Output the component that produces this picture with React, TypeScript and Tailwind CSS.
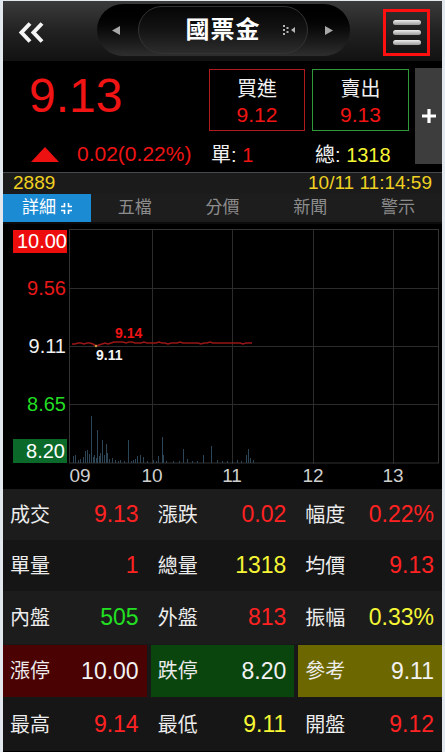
import React from "react";

type Cell = { label: string; value: string; color: string; bg?: string };

const RED = "text-[#ff2222]";
const YELLOW = "text-[#f6f634]";
const GREEN = "text-[#22e022]";
const WHITE = "text-[#f2f2f2]";

const rows: { h: string; bg: string; cells: Cell[] }[] = [
  {
    h: "h-[51px]",
    bg: "bg-[#1c1c1c]",
    cells: [
      { label: "成交", value: "9.13", color: RED },
      { label: "漲跌", value: "0.02", color: RED },
      { label: "幅度", value: "0.22%", color: RED },
    ],
  },
  {
    h: "h-[51px]",
    bg: "bg-[#151515]",
    cells: [
      { label: "單量", value: "1", color: RED },
      { label: "總量", value: "1318", color: YELLOW },
      { label: "均價", value: "9.13", color: RED },
    ],
  },
  {
    h: "h-[53px]",
    bg: "bg-[#1c1c1c]",
    cells: [
      { label: "內盤", value: "505", color: GREEN },
      { label: "外盤", value: "813", color: RED },
      { label: "振幅", value: "0.33%", color: YELLOW },
    ],
  },
  {
    h: "h-[54px]",
    bg: "bg-[#181818]",
    cells: [
      { label: "漲停", value: "10.00", color: WHITE, bg: "bg-[#4a0202]" },
      { label: "跌停", value: "8.20", color: WHITE, bg: "bg-[#0a450e]" },
      { label: "參考", value: "9.11", color: WHITE, bg: "bg-[#6d6700]" },
    ],
  },
  {
    h: "h-[53px]",
    bg: "bg-[#161616]",
    cells: [
      { label: "最高", value: "9.14", color: RED },
      { label: "最低", value: "9.11", color: YELLOW },
      { label: "開盤", value: "9.12", color: RED },
    ],
  },
];

// price line, y offset inside plot, one point every 3px
const line = [
  115, 115, 114, 114, 115, 114, 114, 115, 117, 116, 115, 114, 115, 114, 113, 113, 113, 113, 114, 113, 113,
  114, 114, 114, 113, 114, 114, 114, 114, 113, 114, 114, 115, 114, 114, 114, 113, 114, 114, 114, 114, 114,
  114, 115, 114, 114, 113, 114, 114, 114, 114, 114, 114, 114, 114, 114, 114, 115, 114, 114, 114,
];

// volume bars: [x inside plot, height]
const bars: [number, number][] = [
  [4, 7], [6, 8], [9, 3], [11, 4], [14, 6], [16, 12], [18, 13], [20, 9], [22, 47], [24, 6], [25, 8],
  [27, 5], [28, 33], [30, 7], [31, 10], [33, 23], [35, 8], [37, 19], [38, 10], [40, 4], [43, 5], [46, 3],
  [49, 2], [51, 3], [55, 2], [59, 23], [62, 2], [64, 3], [66, 4], [68, 7], [71, 8], [74, 6], [78, 2],
  [84, 3], [87, 2], [89, 7], [93, 26], [94, 8], [97, 2], [104, 2], [110, 2], [114, 14], [118, 4],
  [123, 2], [128, 2], [134, 8], [142, 17], [148, 3], [153, 2], [158, 2], [163, 2], [168, 3], [172, 2],
  [177, 8], [179, 14], [181, 5], [184, 3],
];

function BackIcon() {
  return (
    <svg width="27" height="23" viewBox="0 0 27 23">
      <polyline points="12,2.5 3.5,11.5 12,20.5" fill="none" stroke="#f4f4f4" strokeWidth="4" strokeLinejoin="miter" />
      <polyline points="24,2.5 15.5,11.5 24,20.5" fill="none" stroke="#f4f4f4" strokeWidth="4" strokeLinejoin="miter" />
    </svg>
  );
}

function Tri({ dir }: { dir: "left" | "right" }) {
  return (
    <svg width="8" height="9" viewBox="0 0 8 9">
      {dir === "left" ? <polygon points="8,0 0,4.5 8,9" fill="#a8a8a8" /> : <polygon points="0,0 8,4.5 0,9" fill="#a8a8a8" />}
    </svg>
  );
}

function StockIcon() {
  return (
    <svg width="12" height="12" viewBox="0 0 12 12">
      <rect x="0" y="1" width="2" height="2" fill="#b5b5b5" />
      <rect x="0" y="5" width="2" height="2" fill="#b5b5b5" />
      <rect x="0" y="9" width="2" height="2" fill="#b5b5b5" />
      <rect x="3.5" y="3" width="2" height="2" fill="#b5b5b5" />
      <rect x="3.5" y="7" width="2" height="2" fill="#b5b5b5" />
      <polygon points="12,3 8,6 12,9" fill="#b5b5b5" />
    </svg>
  );
}

function CollapseIcon() {
  return (
    <svg width="11" height="11" viewBox="0 0 11 11">
      <path d="M3.5 0v3.5H0M7.5 0v3.5H11M3.5 11V7.5H0M7.5 11V7.5H11" fill="none" stroke="#ffffff" strokeWidth="1.6" />
    </svg>
  );
}

function Header() {
  return (
    <div className="flex h-[60px] items-start bg-linear-to-b from-[#3b3b3b] via-[#222222] to-[#121212]">
      <div className="ml-[15px] mt-[20px]">
        <BackIcon />
      </div>
      <div className="ml-[52px] mt-[3px] flex h-[52px] w-[253px] items-center rounded-full bg-linear-to-b from-[#000000] via-[#0c0c0c] to-[#2e2e2e] pl-[15px]">
        <Tri dir="left" />
        <div className="relative ml-[18px] flex h-[48px] w-[170px] items-center justify-center rounded-full border border-[#333333] bg-linear-to-b from-[#060606] via-[#141414] to-[#2c2c2c]">
          <span className="-mt-[1px] text-[24px] font-bold tracking-[1px] text-white">國票金</span>
          <span className="absolute right-[12px] top-[17px]">
            <StockIcon />
          </span>
        </div>
        <div className="ml-[17px]">
          <Tri dir="right" />
        </div>
      </div>
      <div className="ml-[33px] mt-[8px] flex h-[47px] w-[47px] flex-col items-center justify-center gap-[5px] border-[3px] border-[#ff1010] bg-linear-to-b from-[#2c2c2c] to-[#151515]">
        <div className="h-[5px] w-[28px] rounded-full bg-linear-to-b from-[#f0f0f0] to-[#9a9a9a]" />
        <div className="h-[5px] w-[28px] rounded-full bg-linear-to-b from-[#f0f0f0] to-[#9a9a9a]" />
        <div className="h-[5px] w-[28px] rounded-full bg-linear-to-b from-[#f0f0f0] to-[#9a9a9a]" />
      </div>
    </div>
  );
}

function Quote() {
  return (
    <div className="flex h-[112px] border-b border-[#454b52] bg-black">
      <div className="flex w-[206px] flex-col">
        <div className="h-[64px] pl-[26px] pt-[11px] text-[48px] leading-[48px] text-[#f01414]">9.13</div>
        <div className="mt-[14px] flex h-[30px] items-center pl-[28px]">
          <svg width="28" height="15" viewBox="0 0 28 15">
            <polygon points="14,0 28,15 0,15" fill="#ee1111" />
          </svg>
          <span className="ml-[18px] text-[21px] text-[#ee1414]">0.02(0.22%)</span>
        </div>
      </div>
      <div className="flex w-[200px] flex-col">
        <div className="mt-[8px] flex h-[62px] gap-[7px]">
          <div className="flex w-[96px] flex-col items-center border border-[#b01c1c] pt-[6px]">
            <span className="text-[20px] leading-[26px] text-[#f0f0f0]">買進</span>
            <span className="text-[21px] leading-[26px] text-[#f01414]">9.12</span>
          </div>
          <div className="flex w-[97px] flex-col items-center border border-[#2f9a3a] pt-[6px]">
            <span className="text-[20px] leading-[26px] text-[#f0f0f0]">賣出</span>
            <span className="text-[21px] leading-[26px] text-[#f01414]">9.13</span>
          </div>
        </div>
        <div className="mt-[9px] flex h-[30px] items-center gap-[7px] text-[20px]">
          <span className="w-[96px] pl-[2px] text-[#f0f0f0]">
            單: <span className="text-[#f01414]">1</span>
          </span>
          <span className="w-[97px] pl-[3px] text-[#f0f0f0]">
            總: <span className="text-[#f6f634]">1318</span>
          </span>
        </div>
      </div>
      <div className="ml-[6px] mt-[7px] flex h-[96px] w-[27px] items-center justify-center bg-[#3d3d3d]">
        <svg width="14" height="14" viewBox="0 0 14 14">
          <path d="M7 0v14M0 7h14" stroke="#ffffff" strokeWidth="3.2" />
        </svg>
      </div>
    </div>
  );
}

function Tabs() {
  const tabs = ["詳細", "五檔", "分價", "新聞", "警示"];
  return (
    <>
      <div className="flex h-[21px] items-center justify-between bg-[#1b1b1b] px-[10px] text-[19px] text-[#f0d020]">
        <span>2889</span>
        <span>10/11 11:14:59</span>
      </div>
      <div className="grid h-[30px] grid-cols-5 border-b-[2px] border-[#0c0c0c] bg-[#1d1d1d]">
        {tabs.map((t, i) =>
          i === 0 ? (
            <div key={t} className="flex items-center justify-center gap-[5px] bg-[#1b8bd4] text-[17px] text-white">
              {t}
              <CollapseIcon />
            </div>
          ) : (
            <div key={t} className="flex items-center justify-center text-[17px] text-[#8c8c8c]">
              {t}
            </div>
          )
        )}
      </div>
    </>
  );
}

function Chart() {
  const pts = line.map((y, i) => `${3 + i * 3},${y}`).join(" ");
  const xs = [
    { t: "09", x: 80 },
    { t: "10", x: 152 },
    { t: "11", x: 232 },
    { t: "12", x: 313 },
    { t: "13", x: 393 },
  ];
  return (
    <div className="h-[265px] bg-black pt-[5px]">
      <div className="flex h-[235px]">
        <div className="relative w-[66px] text-[20px] leading-[24px]">
          <div className="absolute left-[10px] top-[1px] h-[23px] w-[54px] bg-[#ee0d0d] text-right leading-[23px] text-white">10.00</div>
          <div className="absolute right-[3px] top-[47px] text-[#e81818]">9.56</div>
          <div className="absolute right-[3px] top-[105px] text-[#f0f0f0]">9.11</div>
          <div className="absolute right-[3px] top-[163px] text-[#22dd22]">8.65</div>
          <div className="absolute left-[10px] top-[210px] h-[24px] w-[54px] bg-[#0b6a2a] pr-[2px] text-right text-white">8.20</div>
        </div>
        <div className="relative w-[370px]">
          <svg width="370" height="235" viewBox="0 0 370 235" className="block">
            <g stroke="#2c2c2c" strokeWidth="1">
              <line x1="0" y1="59.5" x2="370" y2="59.5" />
              <line x1="0" y1="117.5" x2="370" y2="117.5" />
              <line x1="0" y1="175.5" x2="370" y2="175.5" />
              <line x1="83.5" y1="0" x2="83.5" y2="235" />
              <line x1="163.5" y1="0" x2="163.5" y2="235" />
              <line x1="244.5" y1="0" x2="244.5" y2="235" />
              <line x1="324.5" y1="0" x2="324.5" y2="235" />
            </g>
            <rect x="0.5" y="0.5" width="369" height="233.5" fill="none" stroke="#333333" />
            <g stroke="#2c4658" strokeWidth="1">
              {bars.map(([x, h]) => (
                <line key={x} x1={x + 0.5} y1={234} x2={x + 0.5} y2={234 - h} />
              ))}
            </g>
            <polyline points={pts} fill="none" stroke="#981616" strokeWidth="1.6" />
            <circle cx="27" cy="117" r="1.2" fill="#c8a040" />
          </svg>
          <span className="absolute left-[46px] top-[96px] text-[14px] font-bold leading-[16px] text-[#f01414]">9.14</span>
          <span className="absolute left-[27px] top-[118px] text-[14px] font-bold leading-[16px] text-[#f4f4f4]">9.11</span>
        </div>
      </div>
      <div className="relative h-[25px] text-[19px] leading-[24px] text-[#cfcfcf]">
        {xs.map((l) => (
          <span key={l.t} className="absolute top-0 w-[40px] text-center" style={{ left: l.x - 3 - 20 }}>
            {l.t}
          </span>
        ))}
      </div>
    </div>
  );
}

function Table() {
  return (
    <div>
      {rows.map((r, i) => (
        <div key={i} className={`grid grid-cols-3 gap-x-[4px] ${r.h} ${r.bg} ${r.cells[0].bg ? "py-[1px]" : ""}`}>
          {r.cells.map((c) => (
            <div key={c.label} className={`flex items-center justify-between pl-[7px] pr-[8px] ${c.bg ?? ""}`}>
              <span className="text-[20px] text-[#ececec]">{c.label}</span>
              <span className={`text-[23px] ${c.color}`}>{c.value}</span>
            </div>
          ))}
        </div>
      ))}
    </div>
  );
}

export default function App() {
  return (
    <div className="h-[752px] w-[445px] overflow-hidden bg-[#e3e8ee] px-[3px] pt-[1px] font-['Liberation_Sans','Noto_Sans_CJK_TC',sans-serif]">
      <div className="h-[751px] overflow-hidden bg-black">
        <Header />
        <Quote />
        <Tabs />
        <Chart />
        <Table />
      </div>
    </div>
  );
}
